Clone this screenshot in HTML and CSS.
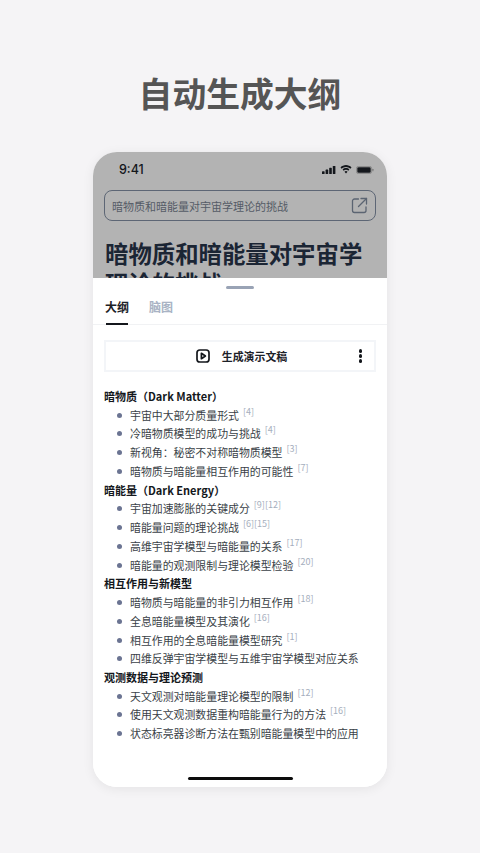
FILE: index.html
```html
<!DOCTYPE html>
<html lang="zh">
<head>
  <meta charset="UTF-8"/>
  <meta name="viewport" content="width=device-width,initial-scale=1"/>
  <title>自动生成大纲</title>
  <link rel="stylesheet" href="styles.css">
</head>
<body>
  <h1 class="page-title">自动生成大纲</h1>

  <div class="phone">
    <div class="phone-top">
      <div class="status-bar">
        <span class="clock">9:41</span>
        <div class="status-icons">
          <svg width="14" height="8" viewBox="0 0 14 8"><rect x="0" y="5.200" width="2.600" height="2.800" rx=".6"/><rect x="3.600" y="3.600" width="2.600" height="4.400" rx=".6"/><rect x="7.200" y="1.800" width="2.600" height="6.200" rx=".6"/><rect x="10.800" y="0" width="2.600" height="8" rx=".6"/></svg>
          <svg width="12" height="9" viewBox="0 0 12 9"><path d="M6 1.900c1.700 0 3.200.7 4.300 1.800l1.200-1.300C10.100 1 8.100.1 6 .1S1.900 1 .5 2.400l1.200 1.300C2.800 2.600 4.300 1.900 6 1.900z"/><path d="M6 4.700c.9 0 1.700.4 2.300 1l1.100-1.200C8.500 3.600 7.300 3.100 6 3.100s-2.500.5-3.400 1.400l1.100 1.200c.6-.6 1.400-1 2.300-1z"/><path d="M6 6.100c-.6 0-1.100.2-1.500.6L6 8.600l1.500-1.900C7.100 6.300 6.600 6.100 6 6.100z"/></svg>
          <svg width="18" height="8" viewBox="0 0 18 8"><rect x=".4" y=".4" width="15.200" height="7.200" rx="2.200" fill="none" stroke="#7d7d7d" stroke-width=".8"/><rect x="1.300" y="1.300" width="13.400" height="5.400" rx="1.300"/><rect x="16.300" y="2.700" width="1.200" height="2.600" rx=".6" fill="#7d7d7d"/></svg>
        </div>
      </div>
      <div class="search-box">
        <span>暗物质和暗能量对宇宙学理论的挑战</span>
        <svg class="share-icon" width="17" height="17" viewBox="0 0 17 17" fill="none" stroke="#5b6472" stroke-width="1.300" stroke-linecap="round" stroke-linejoin="round"><path d="M7.500 2H3.500A2 2 0 0 0 1.500 4v9.500a2 2 0 0 0 2 2H13a2 2 0 0 0 2-2V10"/><path d="M7.500 9.500 15.500 1.500"/><path d="M10 1.500h5.500V7"/></svg>
      </div>
      <h2 class="article-title">暗物质和暗能量对宇宙学理论的挑战</h2>
    </div>

    <div class="sheet">
      <div class="handle"></div>
      <div class="tabs">
        <div class="tab active">大纲</div>
        <div class="tab">脑图</div>
      </div>

      <div class="action-bar">
        <div class="action-main">
          <svg width="14" height="14" viewBox="0 0 14 14" fill="none" stroke="#14171c" stroke-width="1.700" stroke-linejoin="round"><rect x="1" y="1" width="12" height="12" rx="2.800"/><path d="M5.400 4.300v5.400L9.400 7z"/></svg>
          <span>生成演示文稿</span>
        </div>
        <div class="more-dots"><i></i><i></i><i></i></div>
      </div>

      <div class="outline">
        <h3>暗物质（Dark Matter）</h3>
        <ul>
          <li>宇宙中大部分质量形式<sup>[4]</sup></li>
          <li>冷暗物质模型的成功与挑战<sup>[4]</sup></li>
          <li>新视角：秘密不对称暗物质模型<sup>[3]</sup></li>
          <li>暗物质与暗能量相互作用的可能性<sup>[7]</sup></li>
        </ul>
        <h3>暗能量（Dark Energy）</h3>
        <ul>
          <li>宇宙加速膨胀的关键成分<sup>[9][12]</sup></li>
          <li>暗能量问题的理论挑战<sup>[6][15]</sup></li>
          <li>高维宇宙学模型与暗能量的关系<sup>[17]</sup></li>
          <li>暗能量的观测限制与理论模型检验<sup>[20]</sup></li>
        </ul>
        <h3>相互作用与新模型</h3>
        <ul>
          <li>暗物质与暗能量的非引力相互作用<sup>[18]</sup></li>
          <li>全息暗能量模型及其演化<sup>[16]</sup></li>
          <li>相互作用的全息暗能量模型研究<sup>[1]</sup></li>
          <li>四维反弹宇宙学模型与五维宇宙学模型对应关系</li>
        </ul>
        <h3>观测数据与理论预测</h3>
        <ul>
          <li>天文观测对暗能量理论模型的限制<sup>[12]</sup></li>
          <li>使用天文观测数据重构暗能量行为的方法<sup>[16]</sup></li>
          <li>状态标亮器诊断方法在甄别暗能量模型中的应用</li>
        </ul>
      </div>

      <div class="home-indicator"></div>
    </div>
  </div>
</body>
</html>
```

FILE: styles.css
```css
* { box-sizing:border-box; }
html, body { height:100%; }
body {
  margin:0; height:853px; overflow:hidden;
  background:#f5f4f6;
  font-family:"Noto Sans CJK SC","Noto Sans",sans-serif;
  color:#23272e;
}
.page-title {
  margin:0; padding-top:68px; height:152px;
  text-align:center;
  font-size:33.800px; line-height:50px; font-weight:700;
  color:#555;
}
.phone {
  width:294px; height:635px; margin:0 auto;
  display:flex; flex-direction:column;
  border-radius:24px; overflow:hidden;
  background:#fff;
  box-shadow:0 2px 12px rgba(0,0,0,.07);
}
.phone-top {
  height:126px; flex:none; overflow:hidden;
  background:#b3b3b3;
  padding:0 11px;
}
.status-bar {
  height:35px; margin-bottom:3px; padding:0 2px 0 15px;
  display:flex; align-items:center; justify-content:space-between;
}
.clock {
  font-family:Inter,sans-serif;
  font-size:12.500px; font-weight:500; color:#14171c;
}
.status-icons {
  display:flex; align-items:center; gap:4px;
  fill:#14171c;
}
.search-box {
  height:31px; padding:0 7px 0 7px;
  display:flex; align-items:center; justify-content:space-between;
  border:1.300px solid #5d6675; border-radius:8px;
  font-size:11px; color:#555b66;
}
.article-title {
  margin:17px 0 0; padding-left:1px;
  font-size:23.400px; line-height:30px; font-weight:700;
  color:#1b2534;
}
.sheet {
  flex:1; display:flex; flex-direction:column;
  padding:0 11px;
  background:#fff;
}
.handle {
  width:28px; height:3px; margin:8px auto 0;
  border-radius:2px; background:#99a3b5;
}
.tabs {
  margin:0 -11px; padding:0 12px;
  height:36px; flex:none;
  display:flex; gap:20px;
  border-bottom:1px solid #f1f2f4;
}
.tab {
  width:24px; padding-top:8px;
  font-size:12px; line-height:20px; font-weight:700;
  color:#a9b3c4; white-space:nowrap;
}
.tab.active {
  position:relative;
  color:#1c2128;
}
.tab.active::after {
  content:""; position:absolute; left:1px; right:1px; bottom:-1px;
  height:2px; background:#14171c;
}
.action-bar {
  position:relative;
  height:32px; margin-top:15px;
  border:2px solid #f3f5f8;
  display:flex; align-items:center; justify-content:center;
}
.action-main {
  display:flex; align-items:center; gap:12px;
  margin-left:3px;
  font-size:10.900px; font-weight:700; color:#1c2128;
}
.more-dots {
  position:absolute; right:12px; top:7px;
  display:flex; flex-direction:column; gap:1.500px;
}
.more-dots i {
  width:3.500px; height:3.500px; border-radius:50%;
  background:#14171c;
}
.outline {
  margin-top:15px; font-size:10.900px; line-height:18.730px;
}
.outline h3 {
  margin:0; font-size:11px; line-height:18.730px; font-weight:700;
  color:#14171c;
}
.outline ul {
  margin:0; padding:0; list-style:none;
}
.outline li {
  position:relative; padding-left:26px; white-space:nowrap;
  color:#3a3f47;
}
.outline li::before {
  content:""; position:absolute; left:13px; top:7px;
  width:5px; height:5px; border-radius:50%;
  background:#6b7492;
}
.outline sup {
  margin-left:4px;
  font-size:9px; line-height:0; vertical-align:5px;
  color:#a5aebd;
}
.home-indicator {
  width:105px; height:3px; margin:auto auto 7px;
  border-radius:2px; background:#0c0c0c;
}
```
